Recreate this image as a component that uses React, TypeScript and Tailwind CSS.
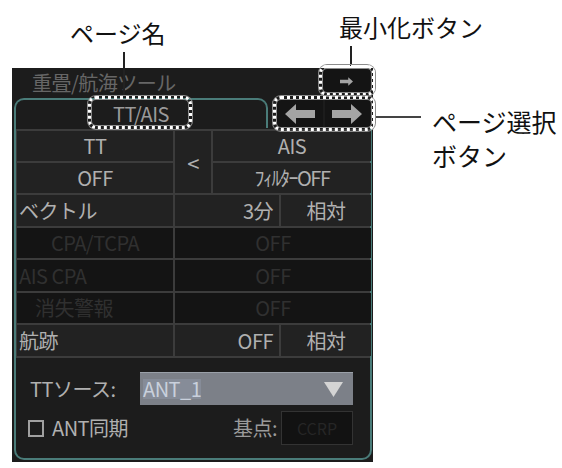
import React from "react";

const FONT = { fontFamily: '"Noto Sans CJK JP", "Noto Sans", sans-serif' };

function LeftArrow({ w = 30, h = 20 }: { w?: number; h?: number }) {
  return (
    <svg width={w} height={h} viewBox="0 0 30 20">
      <polygon points="0,10 11,0 11,6 30,6 30,14 11,14 11,20" fill="#a4a4a4" />
    </svg>
  );
}
function RightArrow({ w = 30, h = 20 }: { w?: number; h?: number }) {
  return (
    <svg width={w} height={h} viewBox="0 0 30 20">
      <polygon points="30,10 19,0 19,6 0,6 0,14 19,14 19,20" fill="#a4a4a4" />
    </svg>
  );
}

function DottedBox({ className }: { className: string }) {
  return (
    <div
      className={`absolute rounded-[8px] border-[3px] border-dotted border-white shadow-[0_0_0_1px_#8c8c8c,inset_0_0_0_1px_#8c8c8c] ${className}`}
    />
  );
}

export default function App() {
  const cell = "bg-[#222222] flex items-center text-[20px] text-[#b0b0b0] leading-none tracking-[-0.5px]";
  const dim = "bg-[#141414] flex items-center text-[20px] text-[#303030] leading-none tracking-[-0.5px]";
  return (
    <div className="relative w-[562px] h-[468px] bg-white overflow-hidden" style={FONT}>
      <div className="pt-[68px] pl-[12px]">
        <div className="w-[361px] h-[394px] bg-[#1c1c1c] pl-[2px] flex flex-col">
          {/* header */}
          <div className="h-[30px] flex items-start justify-between">
            <div className="pl-[18px] h-[30px] flex items-center text-[20px] text-[#666666] tracking-[-0.5px]">
              重畳/航海ツール
            </div>
            <div className="mt-[1px] mr-[3px] w-[48px] h-[24px] bg-[#141414] rounded-[3px] flex items-center justify-center">
              <RightArrow w={13} h={9} />
            </div>
          </div>
          {/* tab row */}
          <div className="h-[30px] flex items-end">
            <div className="w-[254px] h-[30px] border-2 border-b-0 border-[#4a7c79] rounded-t-[10px] flex items-center justify-center text-[20px] text-[#9a9a9a] leading-none tracking-[-0.5px]">
              TT/AIS
            </div>
            <div className="ml-auto mr-[3px] w-[93px] h-[29px] flex gap-[2px] self-start mt-[1px]">
              <div className="flex-1 bg-[#141414] rounded-l-[4px] flex items-center justify-center">
                <LeftArrow />
              </div>
              <div className="flex-1 bg-[#141414] rounded-r-[4px] flex items-center justify-center">
                <RightArrow />
              </div>
            </div>
          </div>
          {/* content */}
          <div className="w-[358px] h-[332px] border-2 border-t-0 border-[#4a7c79] rounded-b-[10px] flex flex-col">
            <div className="pt-[1px]">
              <div className="grid grid-cols-[156px_36px_66px_90px] grid-rows-[30px_30px_31px_30px_31px_30px_31px] gap-[2px] bg-[#3c3c3c] py-[2px] px-[1px]">
                <div className={`${cell} justify-center`}>TT</div>
                <div className={`${cell} row-span-2 justify-center text-[22px] text-[#a8a8a8]`}>&lt;</div>
                <div className={`${cell} col-span-2 justify-center`}>AIS</div>
                <div className={`${cell} justify-center`}>OFF</div>
                <div className={`${cell} col-span-2 justify-center tracking-[-1.5px]`}>ﾌｨﾙﾀｰOFF</div>

                <div className={`${cell} pl-[2px]`}>ベクトル</div>
                <div className={`${cell} col-span-2 justify-end pr-[6px]`}>3分</div>
                <div className={`${cell} justify-center`}>相対</div>

                <div className={`${dim} justify-center`}>CPA/TCPA</div>
                <div className={`${dim} col-span-3 justify-center`}>OFF</div>
                <div className={`${dim} pl-[2px]`}>AIS CPA</div>
                <div className={`${dim} col-span-3 justify-center`}>OFF</div>
                <div className={`${dim} pl-[18px]`}>消失警報</div>
                <div className={`${dim} col-span-3 justify-center`}>OFF</div>

                <div className={`${cell} pl-[2px]`}>航跡</div>
                <div className={`${cell} col-span-2 justify-end pr-[6px]`}>OFF</div>
                <div className={`${cell} justify-center`}>相対</div>
              </div>
            </div>
            {/* bottom area */}
            <div className="flex-1 flex flex-col pl-[14px] pr-[17px] pt-[14px] gap-[6px]">
              <div className="flex items-center h-[33px]">
                <div className="w-[110px] text-[20px] text-[#b0b0b0] leading-none tracking-[-0.5px]">TTソース:</div>
                <div className="flex-1 h-[33px] bg-[#7c8088] border-t border-[#9aa0a8] flex items-center justify-between pl-[3px] pr-[10px]">
                  <span className="text-[20px] text-[#c9d0dc] leading-none bg-[#868c98] tracking-[-0.5px]">ANT_1</span>
                  <svg width="19" height="15" viewBox="0 0 19 15">
                    <polygon points="0,0 19,0 9.5,15" fill="#d4d4d4" />
                  </svg>
                </div>
              </div>
              <div className="flex items-center h-[34px]">
                <div className="w-[16px] h-[17px] border-2 border-[#a0a0a0] ml-[-2px]" />
                <div className="ml-[8px] text-[20px] text-[#b0b0b0] leading-none tracking-[-0.5px]">ANT同期</div>
                <div className="ml-auto mr-[4px] text-[20px] text-[#9a9a9a] leading-none tracking-[-0.5px]">基点:</div>
                <div className="w-[72px] h-[34px] bg-[#121212] border border-[#333333] flex items-center justify-center text-[16px] text-[#262626]">
                  CCRP
                </div>
              </div>
            </div>
          </div>
        </div>
      </div>

      {/* annotations */}
      <div className="absolute left-[70px] top-[21px] text-[24px] text-[#111] leading-none">ページ名</div>
      <div className="absolute left-[123px] top-[52px] w-[2px] h-[44px] bg-[#222]" />
      <div className="absolute left-[339px] top-[15px] text-[24px] text-[#111] leading-none">最小化ボタン</div>
      <div className="absolute left-[350px] top-[46px] w-[2px] h-[20px] bg-[#222]" />
      <div className="absolute left-[376px] top-[116px] w-[45px] h-[2px] bg-[#444]" />
      <div className="absolute left-[432px] top-[104px] text-[25px] text-[#111] leading-[34px]">
        ページ選択
        <br />
        ボタン
      </div>

      <DottedBox className="left-[88px] top-[96px] w-[104px] h-[33px]" />
      <DottedBox className="left-[319px] top-[65px] w-[56px] h-[31px]" />
      <DottedBox className="left-[273px] top-[96px] w-[102px] h-[35px]" />
    </div>
  );
}
